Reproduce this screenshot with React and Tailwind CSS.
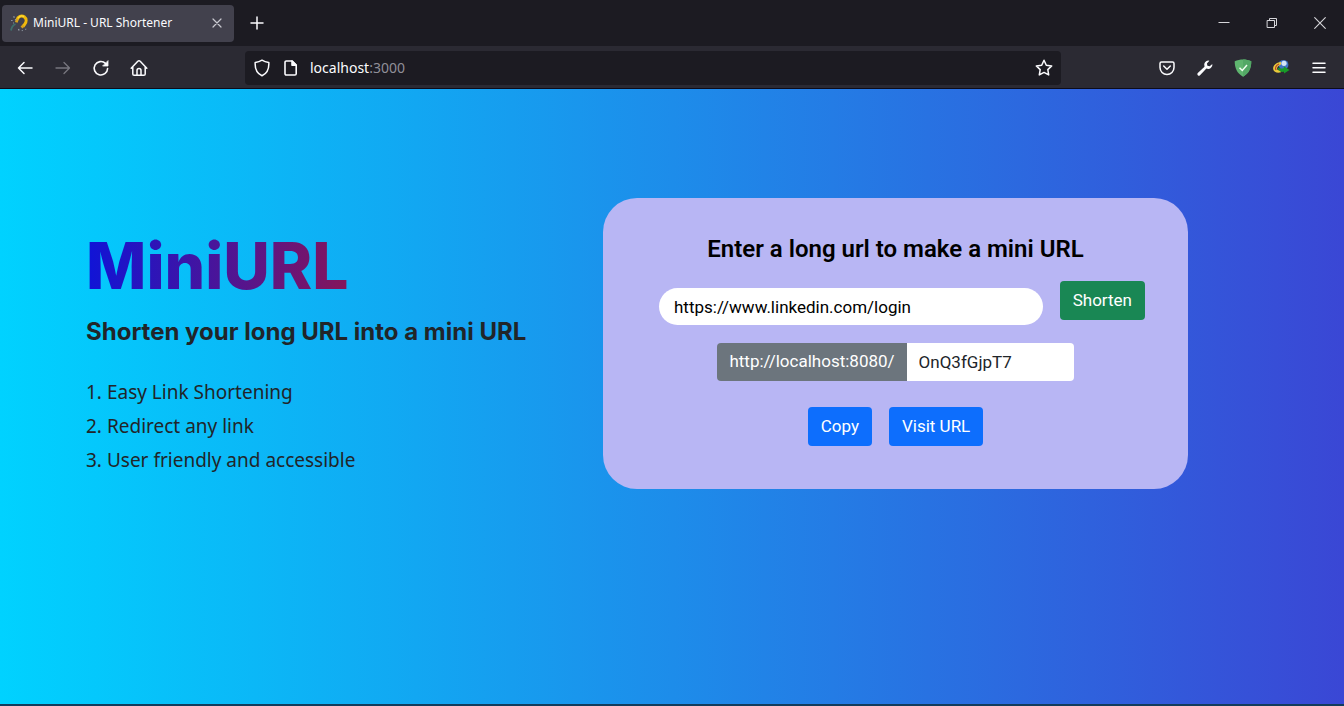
import React from 'react';

const stroke = {
  fill: 'none',
  stroke: 'currentColor',
  strokeLinecap: 'round',
  strokeLinejoin: 'round',
};

function Favicon() {
  return (
    <svg width="18" height="18" viewBox="0 0 18 18" fill="none" aria-hidden="true">
      <path d="M7 5.800C7.800 2.500 11.500.9 14.200 2.800c2.500 1.900 2.400 5 .6 7.400L13 12.500" stroke="#f0b90b" strokeWidth="3" />
      <path d="M8.200 4.200C9.500 1.900 12 1.500 14 2.600" stroke="#ffdd3a" strokeWidth="1.400" />
      <path d="M7.400 5 6.300 8.400M13.600 11.600l-2.100 2" stroke="#d9a21c" strokeWidth="2.800" />
      <path d="M1 16.500C1.500 13 3.500 11 5.500 10" stroke="#3f6f6c" strokeWidth="1.800" />
      <path d="M3.500 2.500l1 1M1.200 6.500h1.300M5 5.500l.8.600M8.500 15l.6 1.500M12 16.200l.5.800M3.200 9h.8M15.500 15l.6.500" stroke="#9aa3ad" strokeWidth="1.200" />
    </svg>
  );
}

function IconButton({ label, className = '', children }) {
  return (
    <button type="button" aria-label={label} className={`flex h-8 items-center justify-center ${className}`}>
      {children}
    </button>
  );
}

function TitleBar() {
  return (
    <div className="flex h-[46px] items-center bg-[#1c1b22] pl-[2px]">
      <div className="flex h-[37px] w-[232px] items-center rounded bg-[#42414d] pl-2 pr-[11px] text-[#fbfbfe]">
        <Favicon />
        <span className="ml-[5px] flex-1 whitespace-nowrap font-['Noto_Sans',sans-serif] text-[12px]">
          MiniURL - URL Shortener
        </span>
        <button type="button" aria-label="Close tab" className="flex text-[#c9c9d0]">
          <svg width="12" height="12" viewBox="0 0 12 12" {...stroke} strokeWidth="1.200">
            <path d="M2 2l8 8M10 2l-8 8" />
          </svg>
        </button>
      </div>
      <IconButton label="New tab" className="ml-4 text-[#fbfbfe]">
        <svg width="14" height="14" viewBox="0 0 14 14" {...stroke} strokeWidth="1.500">
          <path d="M7 1v12M1 7h12" />
        </svg>
      </IconButton>
      <div className="ml-auto flex text-[#d6d6da]">
        <IconButton label="Minimize" className="w-12">
          <svg width="12" height="12" viewBox="0 0 12 12" {...stroke} strokeLinecap="butt" strokeWidth="1">
            <path d="M.5 5.500h11" />
          </svg>
        </IconButton>
        <IconButton label="Restore" className="w-12">
          <svg width="12" height="12" viewBox="0 0 12 12" {...stroke} strokeLinejoin="miter" strokeWidth="1">
            <path d="M1.500 3.500h7v7h-7zM3.500 3.500v-2h7v7h-2" />
          </svg>
        </IconButton>
        <IconButton label="Close window" className="w-12">
          <svg width="12" height="12" viewBox="0 0 12 12" {...stroke} strokeWidth="1.100">
            <path d="M.7.700l10.600 10.600M11.300.700L.700 11.300" />
          </svg>
        </IconButton>
      </div>
    </div>
  );
}

function AddressBar() {
  return (
    <div className="flex h-[34px] w-[816px] min-w-0 items-center rounded bg-[#1c1b22] pl-2 pr-2">
      <svg className="shrink-0" width="18" height="18" viewBox="0 0 18 18" {...stroke} strokeWidth="1.500" aria-hidden="true">
        <path d="M9 1.200c1.900 1.300 4.200 2 6.800 2.200C16.200 9.500 14 14.500 9 16.800 4 14.500 1.800 9.500 2.200 3.400 4.800 3.200 7.100 2.500 9 1.200z" />
      </svg>
      <svg className="ml-3 shrink-0" width="16" height="18" viewBox="0 0 16 18" {...stroke} strokeWidth="1.600" aria-hidden="true">
        <path d="M3.300 2h5.900L13.200 6v8.700a1.300 1.300 0 0 1-1.300 1.300H3.300A1.300 1.300 0 0 1 2 14.700V3.300A1.300 1.300 0 0 1 3.300 2z" />
        <path d="M9 2v4.200h4.200z" fill="currentColor" />
      </svg>
      <div className="ml-[11px] flex-1 font-['Noto_Sans',sans-serif] text-[14px] text-[#8f8f98]">
        <span className="text-[#fbfbfe]">localhost</span>:3000
      </div>
      <IconButton label="Bookmark this page">
        <svg width="18" height="18" viewBox="0 0 18 18" {...stroke} strokeWidth="1.500">
          <path d="M9 1.300l2.300 4.900 5.400.7-3.900 3.700.9 5.300L9 13.400l-4.700 2.500.9-5.300L1.300 6.900l5.400-.7z" />
        </svg>
      </IconButton>
    </div>
  );
}

function Toolbar() {
  return (
    <div className="flex h-[43px] items-center border-b border-[#0c0c1c] bg-[#2b2a33] px-[6px] pt-px text-[#fbfbfe]">
      <IconButton label="Back" className="w-[38px]">
        <svg width="16" height="16" viewBox="0 0 16 16" {...stroke} strokeWidth="1.500">
          <path d="M15 8H1.500M7 2.500L1.500 8 7 13.500" />
        </svg>
      </IconButton>
      <IconButton label="Forward" className="w-[38px] text-[#77767f]">
        <svg width="16" height="16" viewBox="0 0 16 16" {...stroke} strokeWidth="1.300">
          <path d="M1 8h13.500M9 2.500L14.500 8 9 13.500" />
        </svg>
      </IconButton>
      <IconButton label="Reload" className="w-[38px]">
        <svg width="18" height="18" viewBox="0 0 18 18" {...stroke} strokeWidth="1.600">
          <path d="M15.600 9.500A6.700 6.700 0 1 1 13.500 4.400" />
          <path d="M16 2v5h-5z" fill="currentColor" strokeWidth=".8" />
        </svg>
      </IconButton>
      <IconButton label="Home" className="w-[38px]">
        <svg width="18" height="18" viewBox="0 0 18 18" {...stroke} strokeWidth="1.500">
          <path d="M1.200 9.200L7.800 2.200a1.600 1.600 0 0 1 2.400 0l6.600 7M2.800 8v7a1.300 1.300 0 0 0 1.300 1.300h9.800a1.300 1.300 0 0 0 1.300-1.300V8" />
          <path d="M7 16V11.500a2 2 0 0 1 4 0V16" />
        </svg>
      </IconButton>
      <div className="ml-[87px] flex min-w-0 flex-1">
        <AddressBar />
      </div>
      <IconButton label="Save to Pocket" className="w-[38px]">
        <svg width="16" height="16" viewBox="0 0 16 16" {...stroke} strokeWidth="1.500">
          <path d="M2.500 2h11A1.500 1.500 0 0 1 15 3.500V7.500a7 7 0 0 1-14 0V3.500A1.500 1.500 0 0 1 2.500 2z" />
          <path d="M4.700 6L8 9.200 11.300 6" />
        </svg>
      </IconButton>
      <IconButton label="Developer tools" className="w-[38px]">
        <svg width="18" height="18" viewBox="0 0 18 18" fill="currentColor">
          <path d="M16.300 4.900a4.200 4.200 0 0 1-5.900 4.700L4 16.300a1.400 1.400 0 0 1-2.200-2.200L8.500 7.700a4.200 4.200 0 0 1 4.900-5.900l-2.500 2.600.5 2.300 2.300.5z" />
        </svg>
      </IconButton>
      <IconButton label="Ad blocker" className="w-[38px]">
        <svg width="18" height="18" viewBox="0 0 18 18">
          <path d="M9 .5c2.700 0 5.800.6 8.300 1.800C17.300 9 15 14.500 9 17.700 3 14.500.7 9 .7 2.300 3.200 1.100 6.300.5 9 .5z" fill="#5fb56f" />
          <path d="M9 .5c2.700 0 5.800.6 8.300 1.800C17.300 9 15 14.500 9 17.700z" fill="#53a866" />
          <path d="M5.500 8.700l2.800 2.800 4.700-5.400" fill="none" stroke="#f1fff3" strokeWidth="1.500" />
        </svg>
      </IconButton>
      <IconButton label="Download manager" className="w-[38px]">
        <svg width="18" height="18" viewBox="0 0 18 18">
          <circle cx="11.500" cy="5.800" r="4.900" fill="#3f74c4" />
          <circle cx="12" cy="4.300" r="2.600" fill="#d3e4f7" />
          <path d="M9 3C4 3.200.6 7 1.200 10.300c.6 3 4 4 7.800 3l-.5-2.200c-2.300.6-3.700-.4-3.400-1.900.3-1.600 2-3 3.900-3.700z" fill="#e8c93a" />
          <path d="M7 5C4 6.200 2.600 9 4.200 11" fill="none" stroke="#b9402b" strokeWidth="1.200" />
          <path d="M5.500 8.500c2.200 1.200 4.200 1 6.300.7V7.300L17.500 11 12 14.600v-1.800c-3.300.6-5.700-1-6.500-4.300z" fill="#179b28" />
        </svg>
      </IconButton>
      <IconButton label="Open application menu" className="w-[38px]">
        <svg width="16" height="16" viewBox="0 0 16 16" {...stroke} strokeWidth="1.500">
          <path d="M2 3.200h12M2 7.700h12M2 12.200h12" />
        </svg>
      </IconButton>
    </div>
  );
}

function Intro() {
  return (
    <section className="pt-8 text-[#212529]">
      <h1 className="w-fit bg-linear-to-r/srgb from-[#0f14d8] to-[#85155a] bg-clip-text font-['Inter',sans-serif] text-[64px] leading-[72px] font-extrabold whitespace-nowrap text-transparent">
        MiniURL
      </h1>
      <p className="mt-[14px] font-['Inter',sans-serif] text-[24px] leading-[32px] font-bold whitespace-nowrap">
        Shorten your long URL into a mini URL
      </p>
      <ol className="mt-[27px] list-inside list-decimal font-['Noto_Sans',sans-serif] text-[19px] leading-[34px]">
        <li>Easy Link Shortening</li>
        <li>Redirect any link</li>
        <li>User friendly and accessible</li>
      </ol>
    </section>
  );
}

function ShortenCard() {
  return (
    <section className="rounded-[34px] bg-[#b8b6f4] pt-[35px] pb-[43px] font-['Roboto',sans-serif] text-[17px]">
      <h2 className="text-center text-[24px] leading-8 font-semibold text-black">
        Enter a long url to make a mini URL
      </h2>
      <form className="mt-4 flex items-start gap-[17px] pl-14 pr-[43px]" onSubmit={(e) => e.preventDefault()}>
        <input
          type="url"
          aria-label="Long URL"
          defaultValue="https://www.linkedin.com/login"
          className="mt-[7px] h-[37px] min-w-0 flex-1 rounded-[19px] bg-white px-[15px] text-black outline-none"
        />
        <button type="submit" className="h-[39px] rounded bg-[#198754] px-[13px] text-white">
          Shorten
        </button>
      </form>
      <div className="mt-[18px] flex justify-center">
        <label htmlFor="alias" className="flex h-[38px] items-center rounded-l bg-[#6c757d] px-3 text-white">
          http://localhost:8080/
        </label>
        <input
          id="alias"
          readOnly
          defaultValue="OnQ3fGjpT7"
          className="h-[38px] w-[167px] rounded-r bg-white px-3 text-[#212529] outline-none"
        />
      </div>
      <div className="mt-[26px] flex justify-center gap-[17px]">
        <button type="button" className="h-[39px] rounded bg-[#0d6efd] px-[13px] text-white">
          Copy
        </button>
        <a href="#visit" className="flex h-[39px] items-center rounded bg-[#0d6efd] px-[13px] text-white">
          Visit URL
        </a>
      </div>
    </section>
  );
}

export default function App() {
  return (
    <div className="flex min-h-screen flex-col">
      <header>
        <TitleBar />
        <Toolbar />
      </header>
      <main className="grid flex-1 grid-cols-[517fr_585fr] items-start border-b-2 border-[#123c5c] bg-linear-to-r/srgb from-[#00d2ff] to-[#3a47d5] pt-[109px] pr-[156px] pl-[86px]">
        <Intro />
        <ShortenCard />
      </main>
    </div>
  );
}
